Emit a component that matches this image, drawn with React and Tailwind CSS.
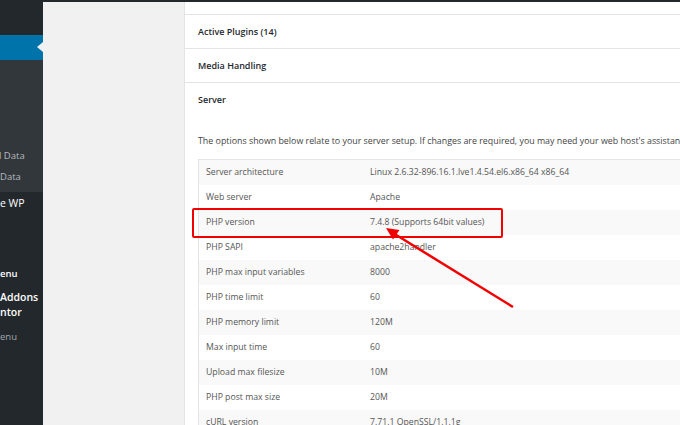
// Site Health info screen (WordPress admin), cropped view
const rows = [
  ["Server architecture", "Linux 2.6.32-896.16.1.lve1.4.54.el6.x86_64 x86_64"],
  ["Web server", "Apache"],
  ["PHP version", "7.4.8 (Supports 64bit values)"],
  ["PHP SAPI", "apache2handler"],
  ["PHP max input variables", "8000"],
  ["PHP time limit", "60"],
  ["PHP memory limit", "120M"],
  ["Max input time", "60"],
  ["Upload max filesize", "10M"],
  ["PHP post max size", "20M"],
  ["cURL version", "7.71.1 OpenSSL/1.1.1g"],
];

const Sidebar = () => (
  <div className="w-[43px] shrink-0 flex flex-col overflow-hidden text-[9.5px] leading-none">
    <div className="h-[33px] shrink-0 bg-[#23282d]" />
    <div className="h-[25px] shrink-0 bg-[#0073aa] relative">
      <div className="absolute right-0 top-[7px] w-0 h-0 border-y-[5px] border-y-transparent border-r-[6px] border-r-[#f1f1f1]" />
    </div>
    <div className="h-[132px] shrink-0 bg-[#32373c] flex flex-col text-[#b4b9be] pt-[91px] gap-[11px] whitespace-nowrap">
      <span className="-ml-[1px]">l Data</span>
      <span>Data</span>
    </div>
    <div className="flex-1 bg-[#23282d] flex flex-col text-white whitespace-nowrap pt-[6px]">
      <span className="text-[10.5px]">e WP</span>
      <span className="mt-[60px] font-semibold">enu</span>
      <span className="mt-[14px] font-semibold text-[10.5px]">Addons</span>
      <span className="mt-[4px] font-semibold text-[10.5px]">ntor</span>
      <span className="mt-[15px] text-[#a0a5aa]">enu</span>
    </div>
  </div>
);

const Heading = ({ children }) => (
  <div className="h-[34px] shrink-0 border-t border-[#e2e4e7] flex items-center pl-[13px] font-semibold text-[9px] text-[#23282d]">
    {children}
  </div>
);

export default function App() {
  return (
    <div
      className="w-[680px] h-[425px] overflow-hidden flex flex-col bg-[#f1f1f1] relative"
      style={{ fontFamily: '"Open Sans", "Noto Sans", sans-serif' }}
    >
      <div className="h-[2px] bg-[#23282d] shrink-0" />
      <div className="flex flex-1 min-h-0">
        <Sidebar />
        <div className="w-[141px] shrink-0 bg-[#f1f1f1]" />
        <div className="flex-1 min-w-0 bg-white border-l border-[#e2e4e7] overflow-hidden flex flex-col">
          <div className="h-[12px] shrink-0" />
          <Heading>Active Plugins (14)</Heading>
          <Heading>Media Handling</Heading>
          <Heading>Server</Heading>
          <div className="pl-[13px] shrink-0">
            <p className="text-[8.85px] leading-[14px] text-[#444] whitespace-nowrap mt-[18px]">
              The options shown below relate to your server setup. If changes are required, you may need your web host's assistance.
            </p>
            <div className="mt-[11px] w-[620px] border border-[#e2e4e7] text-[8.7px] text-[#555]">
              {rows.map(([k, v], i) => (
                <div
                  key={k}
                  className={`h-[25px] flex items-center ${i % 2 === 0 ? "bg-[#f9f9f9]" : "bg-white"}`}
                >
                  <span className="w-[171px] shrink-0 pl-[7px]">{k}</span>
                  <span className="whitespace-nowrap">{v}</span>
                </div>
              ))}
            </div>
          </div>
        </div>
      </div>

      {/* red highlight box */}
      <div className="absolute left-[192px] top-[208px] w-[311px] h-[30px] border-2 border-[#f20000] rounded-[2px]" />
      {/* red arrow */}
      <svg className="absolute left-0 top-0" width="680" height="425" viewBox="0 0 680 425">
        <line x1="513" y1="307" x2="393" y2="233" stroke="#f20000" strokeWidth="2.5" />
        <polygon points="386,228 399.5,230 393,239.5" fill="#f20000" />
      </svg>
    </div>
  );
}
